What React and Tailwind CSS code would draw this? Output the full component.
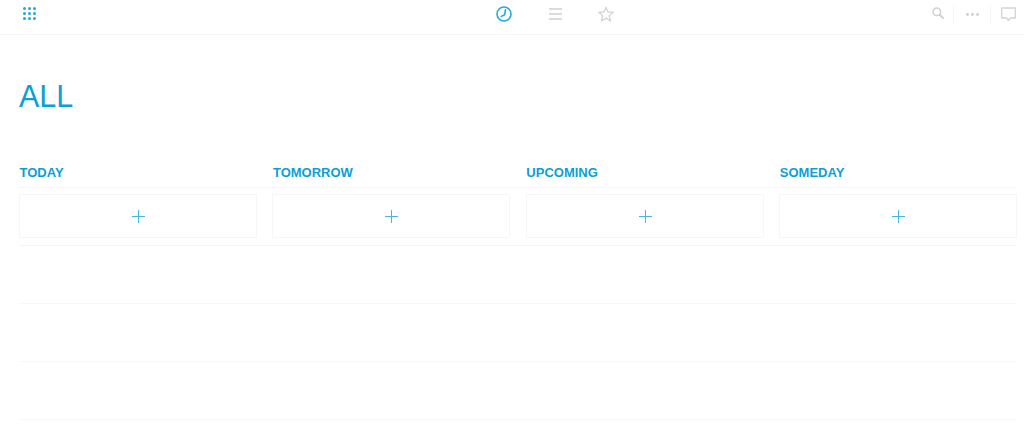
import React from "react";

const BLUE = "#0ba0d2";

const GridIcon = () => (
  <svg width="14" height="14" viewBox="0 0 14 14" fill="#22a9da">
    {[1.5, 6.5, 11.5].map((y) =>
      [1.5, 6.5, 11.5].map((x) => <circle key={`${x}-${y}`} cx={x} cy={y} r="1.5" />)
    )}
  </svg>
);

const ClockIcon = () => (
  <svg width="16" height="16" viewBox="0 0 16 16" fill="none" stroke="#22a9da" strokeWidth="1.6" strokeLinecap="round">
    <circle cx="8" cy="8" r="7" />
    <path d="M9.4 3.8 L8.7 8.8 L5.4 10.4" />
  </svg>
);

const MenuIcon = () => (
  <svg width="13" height="12" viewBox="0 0 13 12" stroke="#d0d0d0" strokeWidth="1.6">
    <path d="M0 1H13M0 6H13M0 11H13" />
  </svg>
);

const StarIcon = () => (
  <svg width="16" height="16" viewBox="0 0 16 16" fill="none" stroke="#d6d6d6" strokeWidth="1.4" strokeLinejoin="round">
    <path d="M8 1.2 L10 6 L15.2 6.3 L11.2 9.7 L12.5 14.8 L8 12.1 L3.5 14.8 L4.8 9.7 L0.8 6.3 L6 6 Z" />
  </svg>
);

const SearchIcon = () => (
  <svg width="12" height="12" viewBox="0 0 12 12" fill="none" stroke="#d2d2d2" strokeWidth="1.5" strokeLinecap="round">
    <circle cx="4.8" cy="4.8" r="3.8" />
    <path d="M7.8 7.8 L11 11" strokeWidth="2" />
  </svg>
);

const DotsIcon = () => (
  <svg width="13" height="3" viewBox="0 0 13 3" fill="#d0d0d0">
    <circle cx="1.5" cy="1.5" r="1.4" />
    <circle cx="6.5" cy="1.5" r="1.4" />
    <circle cx="11.5" cy="1.5" r="1.4" />
  </svg>
);

const ChatIcon = () => (
  <svg width="15" height="15" viewBox="0 0 15 15" fill="none" stroke="#d4d4d4" strokeWidth="1.3" strokeLinejoin="round">
    <path d="M0.7 1 H14.3 V11 H9.5 L7.5 13.5 L5.5 11 H0.7 Z" />
  </svg>
);

const PlusIcon = () => (
  <svg width="13" height="13" viewBox="0 0 13 13" stroke="#45b8e0" strokeWidth="1">
    <path d="M6.5 0V13M0 6.5H13" />
  </svg>
);

const columns = ["TODAY", "TOMORROW", "UPCOMING", "SOMEDAY"];

export default function App() {
  return (
    <div className="h-[445px] overflow-hidden bg-white font-['Liberation_Sans',sans-serif]">
      <div className="relative flex h-[35px] items-center justify-between border-b border-[#f6f6f6] pl-[23px] pr-[8px]">
        <div className="-mt-[7px]"><GridIcon /></div>
        <div className="absolute left-[496px] top-[6px] flex items-center">
          <ClockIcon />
          <div className="ml-[37px]"><MenuIcon /></div>
          <div className="ml-[36px]"><StarIcon /></div>
        </div>
        <div className="-mt-[5px] flex h-[22px] items-center">
          <div className="-mt-[3px]"><SearchIcon /></div>
          <div className="ml-[9px] h-[20px] w-px bg-[#f6f6f6]" />
          <div className="ml-[12px]"><DotsIcon /></div>
          <div className="ml-[11px] h-[20px] w-px bg-[#f6f6f6]" />
          <div className="ml-[10px]"><ChatIcon /></div>
        </div>
      </div>

      <div className="pl-[19px] pr-[7px]">
        <h1 className="mt-[42px] text-[30.5px] leading-[38px] font-normal" style={{ color: BLUE }}>ALL</h1>

        <div className="mt-[50px] grid grid-cols-4 gap-x-[15.7px] border-b border-[#f6f6f6]">
          {columns.map((name) => (
            <div key={name} className="pb-[7px] pl-[0.5px] text-[13px] leading-[15px] font-bold" style={{ color: BLUE }}>
              {name}
            </div>
          ))}
        </div>

        <div className="grid grid-cols-4 gap-x-[15.7px] border-b border-[#f6f6f6] pt-[6px] pb-[7px]">
          {columns.map((name) => (
            <button key={name} className="flex h-[44px] items-center justify-center border border-[#f6f6f6] pt-[1px] pl-[1px]">
              <PlusIcon />
            </button>
          ))}
        </div>

        <div className="h-[58px] border-b border-[#f8f8f8]" />
        <div className="h-[58px] border-b border-[#f8f8f8]" />
        <div className="h-[58px] border-b border-[#f8f8f8]" />
      </div>
    </div>
  );
}
